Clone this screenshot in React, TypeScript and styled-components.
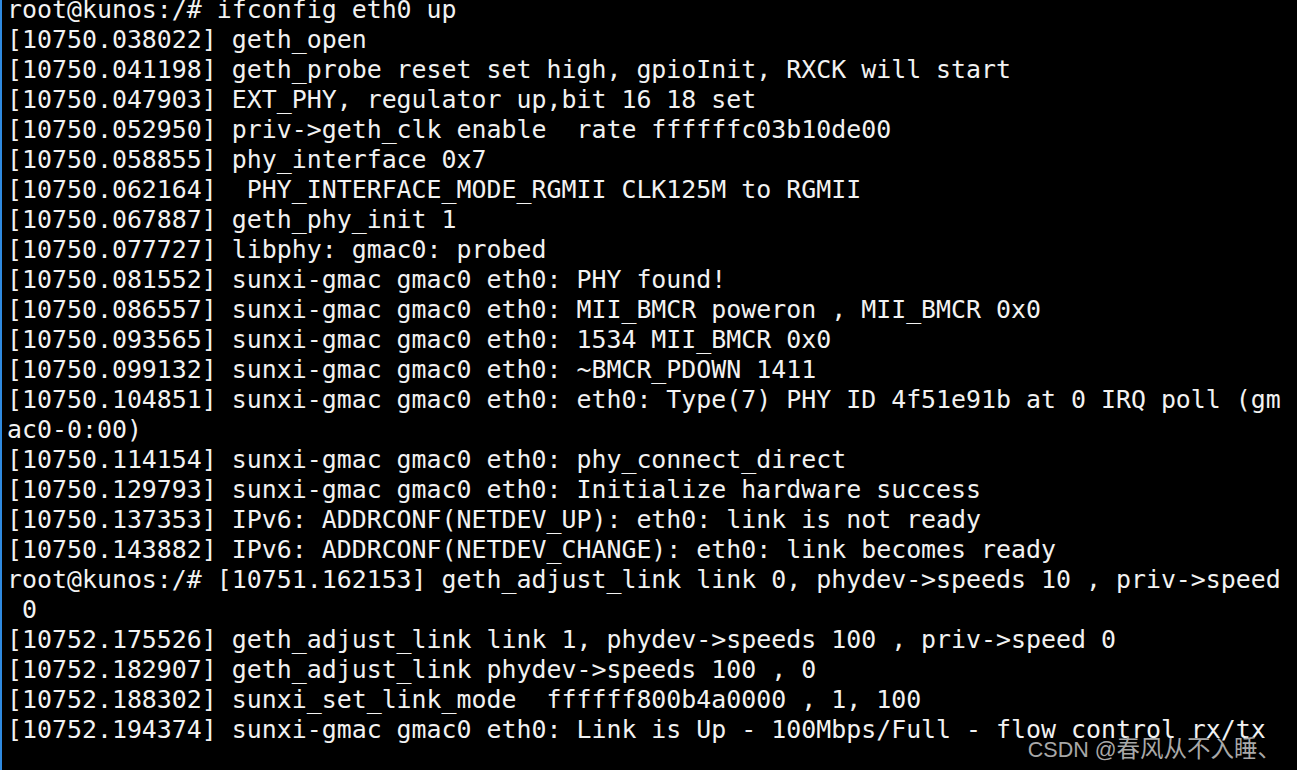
import React from "react";
import styled, { createGlobalStyle } from "styled-components";

const Global = createGlobalStyle`
  html, body {
    margin: 0;
    padding: 0;
    background: #000;
    overflow: hidden;
  }
  #root {
    width: 1297px;
    height: 770px;
  }
`;

const Screen = styled.div`
  position: relative;
  box-sizing: border-box;
  width: 1297px;
  height: 770px;
  background: #000;
  border-left: 2px solid #2f8ae0;
  overflow: hidden;
`;

const Output = styled.div`
  display: flex;
  flex-direction: column;
  margin-top: -5px;
  padding-left: 5px;
`;

const Line = styled.div`
  height: 30px;
  line-height: 30px;
  white-space: pre;
  font-family: "DejaVu Sans Mono", monospace;
  font-size: 24.9px;
  color: #f2f2f2;
`;

const Watermark = styled.div`
  position: absolute;
  right: 16px;
  top: 736px;
  display: flex;
  align-items: baseline;
  white-space: pre;
  color: #a8a8a8;
  line-height: 1;
`;

const Latin = styled.span`
  font-family: "Liberation Sans", sans-serif;
  font-size: 21.5px;
`;

const Cjk = styled.span`
  font-family: "Noto Sans CJK SC", sans-serif;
  font-size: 23.5px;
`;

const lines: string[] = [
  "root@kunos:/# ifconfig eth0 up",
  "[10750.038022] geth_open",
  "[10750.041198] geth_probe reset set high, gpioInit, RXCK will start",
  "[10750.047903] EXT_PHY, regulator up,bit 16 18 set",
  "[10750.052950] priv->geth_clk enable  rate ffffffc03b10de00",
  "[10750.058855] phy_interface 0x7",
  "[10750.062164]  PHY_INTERFACE_MODE_RGMII CLK125M to RGMII",
  "[10750.067887] geth_phy_init 1",
  "[10750.077727] libphy: gmac0: probed",
  "[10750.081552] sunxi-gmac gmac0 eth0: PHY found!",
  "[10750.086557] sunxi-gmac gmac0 eth0: MII_BMCR poweron , MII_BMCR 0x0",
  "[10750.093565] sunxi-gmac gmac0 eth0: 1534 MII_BMCR 0x0",
  "[10750.099132] sunxi-gmac gmac0 eth0: ~BMCR_PDOWN 1411",
  "[10750.104851] sunxi-gmac gmac0 eth0: eth0: Type(7) PHY ID 4f51e91b at 0 IRQ poll (gm",
  "ac0-0:00)",
  "[10750.114154] sunxi-gmac gmac0 eth0: phy_connect_direct",
  "[10750.129793] sunxi-gmac gmac0 eth0: Initialize hardware success",
  "[10750.137353] IPv6: ADDRCONF(NETDEV_UP): eth0: link is not ready",
  "[10750.143882] IPv6: ADDRCONF(NETDEV_CHANGE): eth0: link becomes ready",
  "root@kunos:/# [10751.162153] geth_adjust_link link 0, phydev->speeds 10 , priv->speed",
  " 0",
  "[10752.175526] geth_adjust_link link 1, phydev->speeds 100 , priv->speed 0",
  "[10752.182907] geth_adjust_link phydev->speeds 100 , 0",
  "[10752.188302] sunxi_set_link_mode  ffffff800b4a0000 , 1, 100",
  "[10752.194374] sunxi-gmac gmac0 eth0: Link is Up - 100Mbps/Full - flow control rx/tx",
];

export default function App() {
  return (
    <>
      <Global />
      <Screen>
        <Output>
          {lines.map((l, i) => (
            <Line key={i}>{l}</Line>
          ))}
        </Output>
        <Watermark>
          <Latin>CSDN @</Latin>
          <Cjk>春风从不入睡、</Cjk>
        </Watermark>
      </Screen>
    </>
  );
}
